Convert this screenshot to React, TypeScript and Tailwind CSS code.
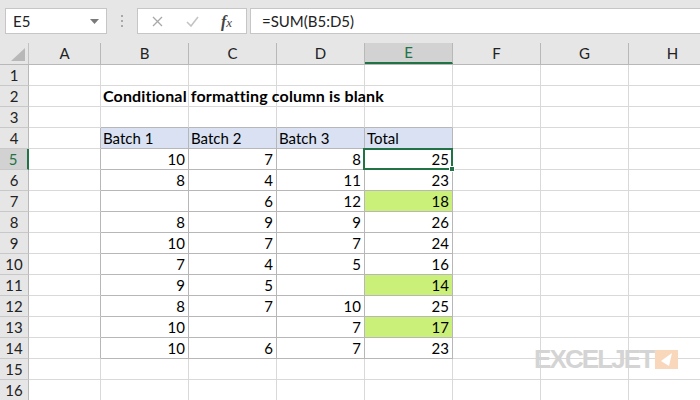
import React from "react";

const cols = ["A", "B", "C", "D", "E", "F", "G", "H"];
const colW = [72, 88, 88, 88, 88, 88, 88, 88];

type Row = { v: (string | number)[]; green?: boolean };
const data: Row[] = [
  { v: [10, 7, 8, 25] },
  { v: [8, 4, 11, 23] },
  { v: ["", 6, 12, 18], green: true },
  { v: [8, 9, 9, 26] },
  { v: [10, 7, 7, 24] },
  { v: [7, 4, 5, 16] },
  { v: [9, 5, "", 14], green: true },
  { v: [8, 7, 10, 25] },
  { v: [10, "", 7, 17], green: true },
  { v: [10, 6, 7, 23] },
];

const font = { fontFamily: "Lato, 'Open Sans', Arial, sans-serif" };

function Toolbar() {
  return (
    <div className="h-[43px] bg-[#e6e6e6] flex items-start pt-[8px] pl-[5px] relative">
      <div className="w-[102px] h-[26px] bg-white border border-[#c6c6c6] flex items-center pl-[7px] relative text-[15px] text-[#222]">
        E5
        <svg className="absolute right-[7px] top-[10px]" width="9" height="5" viewBox="0 0 9 5">
          <path d="M0 0 L9 0 L4.5 5 Z" fill="#7a7a7a" />
        </svg>
      </div>
      <div className="w-[30px] h-[26px] flex flex-col items-center justify-center gap-[3px]">
        <div className="w-[2px] h-[2px] bg-[#a8a8a8]" />
        <div className="w-[2px] h-[2px] bg-[#a8a8a8]" />
        <div className="w-[2px] h-[2px] bg-[#a8a8a8]" />
      </div>
      <div className="w-[110px] h-[26px] bg-white border border-[#c6c6c6] flex items-center relative">
        <svg className="absolute left-[14px] top-[7px]" width="11" height="11" viewBox="0 0 11 11">
          <path d="M1 1 L10 10 M10 1 L1 10" stroke="#a8a8a8" strokeWidth="1.3" />
        </svg>
        <svg className="absolute left-[48px] top-[7px]" width="13" height="11" viewBox="0 0 13 11">
          <path d="M1 6 L5 10 L12 1" stroke="#c4c4c4" strokeWidth="1.6" fill="none" />
        </svg>
        <span
          className="absolute left-[83px] top-[1px] text-[16px] italic text-[#444]"
          style={{ fontFamily: "'Liberation Serif', 'DejaVu Serif', serif" }}
        >
          <span className="font-bold">f</span>
          <span className="text-[13px]">x</span>
        </span>
      </div>
      <div className="ml-[3px] flex-1 h-[26px] bg-white border border-[#c6c6c6] border-r-0 flex items-center pl-[11px] text-[15px] text-[#222]">
        =SUM(B5:D5)
      </div>
    </div>
  );
}

function Logo() {
  return (
    <div className="absolute left-[534px] top-[349px] flex items-start gap-[2px] z-20">
      <span
        className="text-[26px] leading-[20px] font-bold text-[#d4d4d4] tracking-[-1.9px]"
        style={{ fontFamily: "'Liberation Sans', Arial, sans-serif" }}
      >
        EXCELJET
      </span>
      <svg width="23" height="19" viewBox="0 0 23 19" className="mt-[1px]">
        <rect width="23" height="19" fill="#f9d7bb" />
        <path d="M6 11 L17 3 L14 16 Z" fill="#ffffff" />
      </svg>
    </div>
  );
}

export default function App() {
  const rows = Array.from({ length: 16 }, (_, i) => i + 1);
  return (
    <div className="w-[700px] h-[400px] overflow-hidden bg-white relative" style={font}>
      <Toolbar />
      <div className="flex h-[22px] bg-[#e6e6e6] border-b border-[#b8b8b8] w-[805px]">
        <div className="w-[29px] h-full border-r border-[#c2c2c2] relative">
          <svg className="absolute left-[11px] top-[5px]" width="14" height="13" viewBox="0 0 14 13">
            <path d="M14 0 L14 13 L0 13 Z" fill="#b8b8b8" />
          </svg>
        </div>
        {cols.map((c, i) =>
          c === "E" ? (
            <div
              key={c}
              className="h-full bg-[#d2d2d2] border-r border-[#b8b8b8] border-b-2 border-b-[#217346] flex items-center justify-center text-[15px] text-[#217346]"
              style={{ width: colW[i] }}
            >
              {c}
            </div>
          ) : (
            <div
              key={c}
              className="h-full border-r border-[#b8b8b8] flex items-center justify-center text-[15px] text-[#222]"
              style={{ width: colW[i] }}
            >
              {c}
            </div>
          )
        )}
      </div>
      {rows.map((r) => (
        <div key={r} className="flex h-[21px] w-[805px]">
          {r === 5 ? (
            <div className="w-[29px] h-full bg-[#d2d2d2] border-b border-[#c8c8c8] border-r-2 border-r-[#217346] flex items-center justify-center text-[15px] text-[#217346] pr-[1px]">
              {r}
            </div>
          ) : (
            <div className="w-[29px] h-full bg-[#e6e6e6] border-b border-[#c8c8c8] border-r border-r-[#b8b8b8] flex items-center justify-center text-[15px] text-[#222]">
              {r}
            </div>
          )}
          {cols.map((c, ci) => {
            const w = colW[ci];
            const inTable = r >= 4 && r <= 14 && ci >= 1 && ci <= 4;
            const leftOfTable = r >= 4 && r <= 14 && ci === 0;
            const aboveTable = r === 3 && ci >= 1 && ci <= 4;
            let border = "border-r border-b border-[#d9d9d9]";
            if (inTable) border = "border-r border-b border-[#b7b7b7]";
            else if (leftOfTable) border = "border-b border-[#d9d9d9] border-r border-r-[#b7b7b7]";
            else if (aboveTable) border = "border-r border-[#d9d9d9] border-b border-b-[#b7b7b7]";

            if (r === 2 && c === "B") {
              return (
                <div key={c} className={`h-full ${border} relative`} style={{ width: w }}>
                  <span className="absolute left-[2px] top-0 leading-[20px] text-[16px] tracking-[0.15px] font-bold text-black whitespace-nowrap z-10">
                    Conditional formatting column is blank
                  </span>
                </div>
              );
            }
            if (r === 4 && inTable) {
              const labels = ["Batch 1", "Batch 2", "Batch 3", "Total"];
              return (
                <div
                  key={c}
                  className={`h-full ${border} bg-[#d9e1f2] pl-[2px] leading-[20px] text-[15px] text-black`}
                  style={{ width: w }}
                >
                  {labels[ci - 1]}
                </div>
              );
            }
            if (inTable) {
              const row = data[r - 5];
              const val = row.v[ci - 1];
              const green = row.green && c === "E";
              return (
                <div
                  key={c}
                  className={`h-full ${border} ${green ? "bg-[#caf07a]" : ""} pr-[3px] text-right leading-[20px] text-[15px] text-black relative`}
                  style={{ width: w }}
                >
                  {val}
                  {r === 5 && c === "E" && (
                    <>
                      <div className="absolute -left-[2px] -top-[1px] -right-[1px] -bottom-[1px] border-2 border-[#217346] z-10" />
                      <div className="absolute -right-[3px] -bottom-[3px] w-[6px] h-[6px] bg-[#217346] border border-white z-10" />
                    </>
                  )}
                </div>
              );
            }
            return <div key={c} className={`h-full ${border}`} style={{ width: w }} />;
          })}
        </div>
      ))}
      <Logo />
    </div>
  );
}
